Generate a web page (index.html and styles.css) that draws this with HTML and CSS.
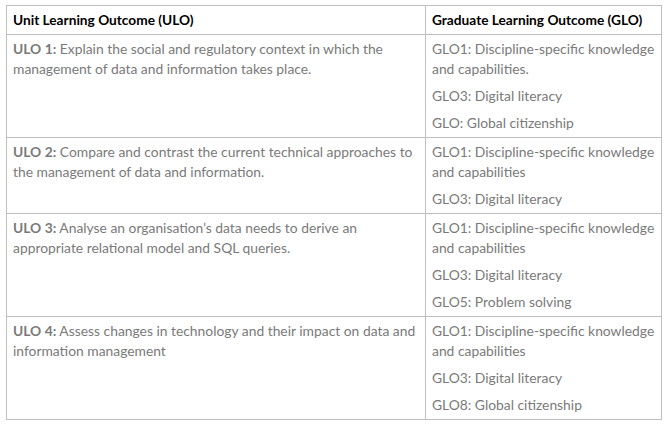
FILE: index.html
```html
<!DOCTYPE html>
<html lang="en">
<head>
<meta charset="utf-8">
<title>Learning Outcomes</title>
<link rel="stylesheet" href="styles.css">
</head>
<body>
<table class="outcomes">
  <colgroup>
    <col class="col-ulo">
    <col class="col-glo">
  </colgroup>
  <thead>
    <tr>
      <th>Unit Learning Outcome (ULO)</th>
      <th>Graduate Learning Outcome (GLO)</th>
    </tr>
  </thead>
  <tbody>
    <tr>
      <td><p><strong>ULO 1:</strong> Explain the social and regulatory context in which the management of data and information takes place.</p></td>
      <td>
        <p>GLO1: Discipline-specific knowledge and capabilities.</p>
        <p>GLO3: Digital literacy</p>
        <p>GLO: Global citizenship</p>
      </td>
    </tr>
    <tr>
      <td><p><strong>ULO 2:</strong> Compare and contrast the current technical approaches to the management of data and information.</p></td>
      <td>
        <p>GLO1: Discipline-specific knowledge and capabilities</p>
        <p>GLO3: Digital literacy</p>
      </td>
    </tr>
    <tr>
      <td><p><strong>ULO 3:</strong> Analyse an organisation’s data needs to derive an appropriate relational model and SQL queries.</p></td>
      <td>
        <p>GLO1: Discipline-specific knowledge and capabilities</p>
        <p>GLO3: Digital literacy</p>
        <p>GLO5: Problem solving</p>
      </td>
    </tr>
    <tr>
      <td><p><strong>ULO 4:</strong> Assess changes in technology and their impact on data and information management</p></td>
      <td>
        <p>GLO1: Discipline-specific knowledge and capabilities</p>
        <p>GLO3: Digital literacy</p>
        <p>GLO8: Global citizenship</p>
      </td>
    </tr>
  </tbody>
</table>
</body>
</html>
```
FILE: styles.css
```css
html, body {
  margin: 0;
  padding: 0;
  background: #ffffff;
}

body {
  padding: 5px 0 0 6px;
  font-family: Lato, "Open Sans", sans-serif;
  font-size: 13.85px;
  line-height: 20px;
  color: #7a7a7a;
}

.outcomes {
  border-collapse: collapse;
  width: 655px;
  table-layout: fixed;
}

.col-ulo { width: 419px; }
.col-glo { width: 236px; }

.outcomes th,
.outcomes td {
  border: 1px solid #bfbfbf;
  padding: 4px 4px 4px 6px;
  vertical-align: top;
  text-align: left;
}

.outcomes th {
  color: #000000;
  font-weight: 700;
  font-size: 13.7px;
}

.outcomes p {
  margin: 0;
}

.outcomes p + p {
  margin-top: 7px;
}

.outcomes strong {
  font-weight: 700;
}
```
